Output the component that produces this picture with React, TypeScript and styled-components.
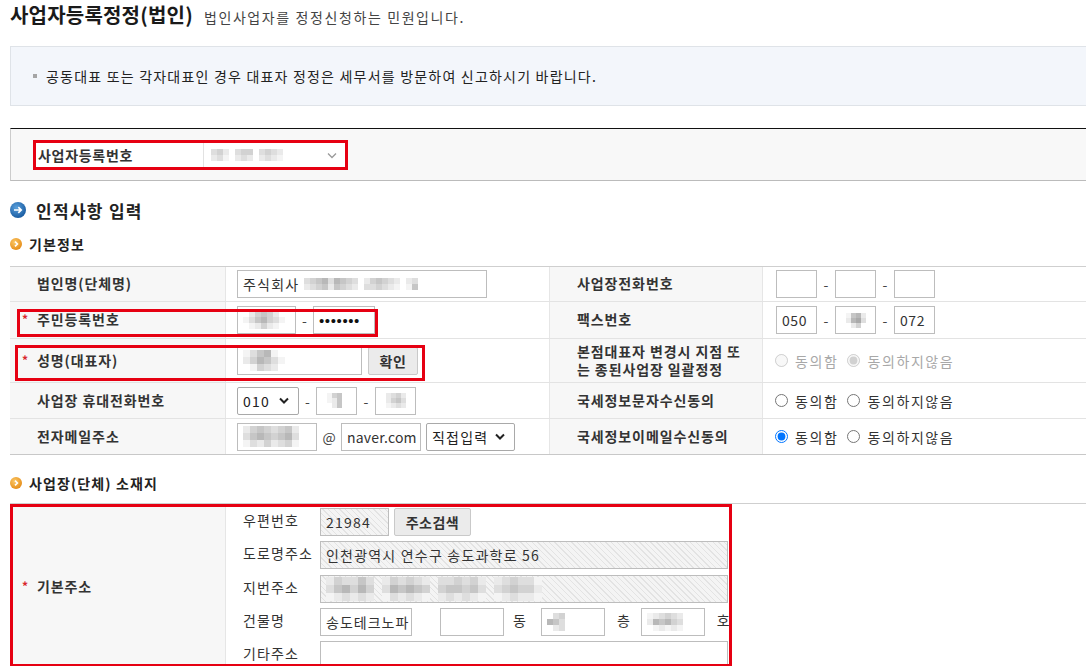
import React from "react"
import styled, { createGlobalStyle } from "styled-components"

const GlobalStyle = createGlobalStyle`
    html, body {
        margin: 0;
        padding: 0;
        background: #fff;
        overflow: hidden;
    }
    body {
        font-family: "Noto Sans CJK KR", "Noto Sans", sans-serif;
        font-size: 14px;
        color: #333;
    }
`

const shades: Record<string, string> = {
    "0": "transparent",
    "1": "#f4f4f4",
    "2": "#eaeaea",
    "3": "#dedede",
    "4": "#d2d2d2",
    "5": "#c6c6c6",
    "6": "#b8b8b8",
    "7": "#aaaaaa",
    "8": "#9c9c9c",
    "9": "#8e8e8e"
}

const MosaicGrid = styled.span<{ $cols: number; $cell: number }>`
    display: inline-grid;
    grid-template-columns: repeat(${(p) => p.$cols}, ${(p) => p.$cell}px);
    grid-auto-rows: ${(p) => p.$cell}px;
    vertical-align: middle;
    flex-shrink: 0;
`

const MosaicCell = styled.span<{ $c: string }>`
    background: ${(p) => p.$c};
`

// blurred-out personal data, drawn as grey pixel blocks
const Mosaic: React.FC<{ rows: string[]; cell?: number }> = ({ rows, cell = 6 }) => {
    const cols = Math.max(...rows.map((r) => r.length))
    return (
        <MosaicGrid $cols={cols} $cell={cell}>
            {rows.flatMap((r, i) =>
                r
                    .padEnd(cols, "0")
                    .split("")
                    .map((ch, j) => <MosaicCell key={`${i}-${j}`} $c={shades[ch]} />)
            )}
        </MosaicGrid>
    )
}

const Page = styled.div`
    padding-left: 10px;
    width: 1076px;
`

const TitleRow = styled.div`
    display: flex;
    align-items: baseline;
    height: 46px;
    padding-top: 2px;
    box-sizing: border-box;
`

const Title = styled.h1`
    margin: 0;
    font-size: 20px;
    line-height: 26px;
    letter-spacing: 0.2px;
    font-weight: bold;
    color: #1a1a1a;
`

const TitleDesc = styled.span`
    margin-left: 11px;
    font-size: 14px;
    letter-spacing: 1.6px;
    color: #444;
`

const Notice = styled.div`
    display: flex;
    align-items: center;
    height: 60px;
    box-sizing: border-box;
    padding-left: 22px;
    background: #f3f6fb;
    border: 1px solid #dfe3e8;
    border-right: none;
    font-size: 14px;
    letter-spacing: 1.2px;
    color: #222;
`

const Bullet = styled.span`
    width: 4px;
    height: 4px;
    background: #a5a5a5;
    margin-right: 9px;
`

const BizBox = styled.div`
    margin-top: 22px;
    height: 53px;
    box-sizing: border-box;
    padding: 11px 0 0 22px;
    background: #f8f8f8;
    border-top: 1px solid #111;
    border-bottom: 1px solid #bbb;
    border-left: 1px solid #ccc;
`

const RedFrame = styled.div`
    display: flex;
    width: 315px;
    height: 30px;
    box-sizing: border-box;
    border: 3px solid #e60012;
    background: #fff;
`

const BizLabel = styled.div`
    display: flex;
    align-items: center;
    width: 165px;
    padding-left: 2px;
    font-weight: bold;
    font-size: 14px;
    letter-spacing: 0.7px;
    color: #333;
`

const BizSelect = styled.div`
    flex: 1;
    display: flex;
    align-items: center;
    justify-content: space-between;
    padding: 0 8px 0 7px;
    border-left: 1px solid #e2e2e2;
`

const Chevron: React.FC<{ $light?: boolean }> = ({ $light }) => (
    <svg width="10" height="7" viewBox="0 0 10 7">
        <path
            d="M1 1.5 L5 5.5 L9 1.5"
            fill="none"
            stroke={$light ? "#9a9a9a" : "#222"}
            strokeWidth={$light ? 1.3 : 2}
        />
    </svg>
)

const SectionTitle = styled.h2`
    display: flex;
    align-items: center;
    gap: 10px;
    margin: 18px 0 0;
    height: 22px;
    font-size: 17px;
    letter-spacing: 1.3px;
    font-weight: bold;
    color: #222;
`

const SubTitle = styled.h3<{ $mt: number; $mb: number }>`
    display: flex;
    align-items: center;
    gap: 7px;
    margin: ${(p) => p.$mt}px 0 ${(p) => p.$mb}px;
    height: 18px;
    font-size: 14px;
    letter-spacing: 1.1px;
    font-weight: bold;
    color: #222;
`

const BlueIcon = () => (
    <svg width="16" height="16" viewBox="0 0 16 16">
        <defs>
            <radialGradient id="bl" cx="40%" cy="35%" r="70%">
                <stop offset="0" stopColor="#5aa0dc" />
                <stop offset="1" stopColor="#15589e" />
            </radialGradient>
        </defs>
        <circle cx="8" cy="8" r="8" fill="url(#bl)" />
        <path d="M4 8 H11 M8.3 5.2 L11.2 8 L8.3 10.8" fill="none" stroke="#fff" strokeWidth="1.7" />
    </svg>
)

const OrangeIcon = () => (
    <svg width="12" height="12" viewBox="0 0 12 12">
        <defs>
            <radialGradient id="or" cx="40%" cy="35%" r="70%">
                <stop offset="0" stopColor="#fbc866" />
                <stop offset="1" stopColor="#e58a14" />
            </radialGradient>
        </defs>
        <circle cx="6" cy="6" r="6" fill="url(#or)" />
        <path d="M5 3.6 L7.4 6 L5 8.4" fill="none" stroke="#fff" strokeWidth="1.6" />
    </svg>
)

const FormTable = styled.div`
    position: relative;
    border-top: 1px solid #cfcfcf;
`

const Row = styled.div<{ $h: number; $last?: boolean }>`
    display: grid;
    grid-template-columns: 216px 324px 213px 1fr;
    height: ${(p) => p.$h}px;
    box-sizing: border-box;
    border-bottom: 1px solid ${(p) => (p.$last ? "#c8c8c8" : "#e3e3e3")};
`

const Label = styled.div`
    display: flex;
    align-items: center;
    padding: 0 0 2px 27px;
    background: #f7f7f7;
    border-right: 1px solid #e6e6e6;
    font-weight: bold;
    font-size: 14px;
    line-height: 18px;
    letter-spacing: 0.9px;
    color: #333;
`

const Star = styled.span`
    width: 15px;
    margin-left: -15px;
    color: #d9262c;
    font-size: 12px;
    font-weight: bold;
`

const Value = styled.div<{ $pl: number; $divider?: boolean }>`
    display: flex;
    align-items: center;
    padding-left: ${(p) => p.$pl}px;
    border-right: ${(p) => (p.$divider ? "1px solid #e6e6e6" : "none")};
`

const Field = styled.div<{ $w: number; $hatch?: boolean; $h?: number; $ml?: number; $ls?: number }>`
    display: flex;
    align-items: center;
    width: ${(p) => p.$w}px;
    height: ${(p) => p.$h ?? 28}px;
    box-sizing: border-box;
    margin-left: ${(p) => p.$ml ?? 0}px;
    padding-left: 5px;
    border: 1px solid #bdbdbd;
    background: ${(p) =>
        p.$hatch ? "repeating-linear-gradient(45deg, #f4f4f4 0 3px, #e3e3e3 3px 4px)" : "#fff"};
    font-size: 14px;
    letter-spacing: ${(p) => p.$ls ?? 1.2}px;
    color: #333;
    white-space: nowrap;
    overflow: hidden;
    flex-shrink: 0;
`

const Dots = styled.span`
    font-family: "Liberation Sans", Arial, sans-serif;
    font-size: 15px;
    letter-spacing: 0.6px;
    color: #111;
`

const Sep = styled.span<{ $w?: number }>`
    width: ${(p) => p.$w ?? 18}px;
    text-align: center;
    font-size: 14px;
    color: #444;
    flex-shrink: 0;
`

const SelectBox = styled.div<{ $w: number; $ml?: number }>`
    display: flex;
    align-items: center;
    justify-content: space-between;
    width: ${(p) => p.$w}px;
    height: 28px;
    box-sizing: border-box;
    margin-left: ${(p) => p.$ml ?? 0}px;
    padding: 0 9px 0 5px;
    border: 1px solid #a9a9a9;
    border-radius: 2px;
    background: #fff;
    font-size: 14px;
    letter-spacing: 1.2px;
    color: #222;
    flex-shrink: 0;
`

const Button = styled.button<{ $w: number; $ml: number }>`
    width: ${(p) => p.$w}px;
    height: 28px;
    margin-left: ${(p) => p.$ml}px;
    padding: 0;
    border: 1px solid #c9c9c9;
    border-radius: 2px;
    background: #ebebeb;
    font-family: inherit;
    font-weight: bold;
    font-size: 14px;
    letter-spacing: 0.5px;
    color: #333;
    flex-shrink: 0;
`

const RadioLabel = styled.label<{ $disabled?: boolean }>`
    display: flex;
    align-items: center;
    gap: 7px;
    margin-right: 9px;
    font-size: 14px;
    letter-spacing: 1.6px;
    color: ${(p) => (p.$disabled ? "#a8a8a8" : "#333")};

    input {
        margin: 0;
        width: 13px;
        height: 13px;
    }
`

const Highlight = styled.div<{ $top: number; $left: number; $w: number; $h: number }>`
    position: absolute;
    top: ${(p) => p.$top}px;
    left: ${(p) => p.$left}px;
    width: ${(p) => p.$w}px;
    height: ${(p) => p.$h}px;
    box-sizing: border-box;
    border: 3px solid #e60012;
    pointer-events: none;
`

const AddrTable = styled.div`
    position: relative;
    display: grid;
    grid-template-columns: 216px 1fr;
    height: 200px;
    border-top: 1px solid #cfcfcf;
`

const AddrLabel = styled(Label)`
    align-items: flex-start;
    padding-top: 73px;
`

const AddrValue = styled.div`
    padding: 4px 0 0 17px;
`

const AddrGrid = styled.div`
    display: grid;
    grid-template-columns: 77px auto;
    grid-auto-rows: 28px;
    row-gap: 5.3px;
    align-items: center;
`

const SubLabel = styled.span`
    padding-bottom: 4px;
    font-size: 14px;
    letter-spacing: 1.1px;
    color: #333;
`

const Line = styled.div`
    display: flex;
    align-items: center;
`

const Unit = styled.span<{ $ml: number; $mr: number }>`
    margin: 0 ${(p) => p.$mr}px 3px ${(p) => p.$ml}px;
    font-size: 14px;
    color: #333;
`

type Radio = { name: string; yes?: boolean; no?: boolean; disabled?: boolean }

const Agree: React.FC<Radio> = ({ name, yes, no, disabled }) => (
    <>
        <RadioLabel $disabled={disabled}>
            <input type="radio" name={name} defaultChecked={yes} disabled={disabled} />
            동의함
        </RadioLabel>
        <RadioLabel $disabled={disabled}>
            <input type="radio" name={name} defaultChecked={no} disabled={disabled} />
            동의하지않음
        </RadioLabel>
    </>
)

export default function App() {
    return (
        <>
            <GlobalStyle />
            <Page>
                <TitleRow>
                    <Title>사업자등록정정(법인)</Title>
                    <TitleDesc>법인사업자를 정정신청하는 민원입니다.</TitleDesc>
                </TitleRow>

                <Notice>
                    <Bullet />
                    공동대표 또는 각자대표인 경우 대표자 정정은 세무서를 방문하여 신고하시기 바랍니다.
                </Notice>

                <BizBox>
                    <RedFrame>
                        <BizLabel>사업자등록번호</BizLabel>
                        <BizSelect>
                            <Mosaic rows={["3420344034320", "2310232023210"]} cell={6} />
                            <Chevron $light />
                        </BizSelect>
                    </RedFrame>
                </BizBox>

                <SectionTitle>
                    <BlueIcon />
                    인적사항 입력
                </SectionTitle>
                <SubTitle $mt={14} $mb={13}>
                    <OrangeIcon />
                    기본정보
                </SubTitle>

                <FormTable>
                    <Row $h={35}>
                        <Label>법인명(단체명)</Label>
                        <Value $pl={11} $divider>
                            <Field $w={250}>
                                주식회사&nbsp;
                                <Mosaic rows={["34563654302454320230", "23452543203343210150"]} cell={6} />
                            </Field>
                        </Value>
                        <Label>사업장전화번호</Label>
                        <Value $pl={13}>
                            <Field $w={41} />
                            <Sep>-</Sep>
                            <Field $w={41} />
                            <Sep>-</Sep>
                            <Field $w={41} />
                        </Value>
                    </Row>
                    <Row $h={37}>
                        <Label>
                            <Star>*</Star>주민등록번호
                        </Label>
                        <Value $pl={11} $divider>
                            <Field $w={59}>
                                <Mosaic rows={["02454200", "13564310", "01242100"]} cell={6} />
                            </Field>
                            <Sep $w={17}>-</Sep>
                            <Field $w={62}>
                                <Dots>•••••••</Dots>
                            </Field>
                        </Value>
                        <Label>팩스번호</Label>
                        <Value $pl={13}>
                            <Field $w={41} $ls={0.6}>
                                050
                            </Field>
                            <Sep>-</Sep>
                            <Field $w={41}>
                                <Mosaic rows={["01562", "02673", "00240"]} cell={5} />
                            </Field>
                            <Sep>-</Sep>
                            <Field $w={41} $ls={0.6}>
                                072
                            </Field>
                        </Value>
                    </Row>
                    <Row $h={44}>
                        <Label>
                            <Star>*</Star>성명(대표자)
                        </Label>
                        <Value $pl={11} $divider>
                            <Field $w={125} $h={29}>
                                <Mosaic rows={["135610", "246531", "014320"]} cell={7} />
                            </Field>
                            <Button $w={50} $ml={6}>
                                확인
                            </Button>
                        </Value>
                        <Label>
                            본점대표자 변경시 지점 또
                            <br />는 종된사업장 일괄정정
                        </Label>
                        <Value $pl={12}>
                            <Agree name="branch" no disabled />
                        </Value>
                    </Row>
                    <Row $h={36}>
                        <Label>사업장 휴대전화번호</Label>
                        <Value $pl={11} $divider>
                            <SelectBox $w={62}>
                                010
                                <Chevron />
                            </SelectBox>
                            <Sep $w={17}>-</Sep>
                            <Field $w={41}>
                                <Mosaic rows={["01450", "01250", "00250"]} cell={5} />
                            </Field>
                            <Sep>-</Sep>
                            <Field $w={41}>
                                <Mosaic rows={["023420", "024530", "012320"]} cell={5} />
                            </Field>
                        </Value>
                        <Label>국세정보문자수신동의</Label>
                        <Value $pl={12}>
                            <Agree name="sms" />
                        </Value>
                    </Row>
                    <Row $h={36} $last>
                        <Label>전자메일주소</Label>
                        <Value $pl={11} $divider>
                            <Field $w={80}>
                                <Mosaic rows={["245434520", "356545630", "132423410"]} cell={7} />
                            </Field>
                            <Sep $w={24}>@</Sep>
                            <Field $w={80} $ls={0.2}>
                                naver.com
                            </Field>
                            <SelectBox $w={89} $ml={5}>
                                직접입력
                                <Chevron />
                            </SelectBox>
                        </Value>
                        <Label>국세정보이메일수신동의</Label>
                        <Value $pl={12}>
                            <Agree name="email" yes />
                        </Value>
                    </Row>
                    <Highlight $top={42} $left={7} $w={361} $h={28} />
                    <Highlight $top={78} $left={5} $w={410} $h={36} />
                </FormTable>

                <SubTitle $mt={19} $mb={11}>
                    <OrangeIcon />
                    사업장(단체) 소재지
                </SubTitle>

                <AddrTable>
                    <AddrLabel>
                        <Star>*</Star>기본주소
                    </AddrLabel>
                    <AddrValue>
                        <AddrGrid>
                            <SubLabel>우편번호</SubLabel>
                            <Line>
                                <Field $w={69} $hatch>
                                    21984
                                </Field>
                                <Button $w={77} $ml={5}>
                                    주소검색
                                </Button>
                            </Line>
                            <SubLabel>도로명주소</SubLabel>
                            <Field $w={408} $hatch>
                                인천광역시 연수구 송도과학로 56
                            </Field>
                            <SubLabel>지번주소</SubLabel>
                            <Field $w={408} $hatch>
                                <Mosaic
                                    rows={[
                                        "2433530243432033434202343310",
                                        "3564640365654045545303454420",
                                        "1232320132321023232101232210"
                                    ]}
                                    cell={8}
                                />
                            </Field>
                            <SubLabel>건물명</SubLabel>
                            <Line>
                                <Field $w={92} $ls={1}>
                                    송도테크노파
                                </Field>
                                <Field $w={64} $ml={28} />
                                <Unit $ml={9} $mr={15}>
                                    동
                                </Unit>
                                <Field $w={64}>
                                    <Mosaic rows={["0340", "6530", "0230"]} cell={6} />
                                </Field>
                                <Unit $ml={12} $mr={11}>
                                    층
                                </Unit>
                                <Field $w={64}>
                                    <Mosaic rows={["123432", "265643", "012121"]} cell={6} />
                                </Field>
                                <Unit $ml={12} $mr={0}>
                                    호
                                </Unit>
                            </Line>
                            <SubLabel>기타주소</SubLabel>
                            <Field $w={408} />
                        </AddrGrid>
                    </AddrValue>
                    <Highlight $top={0} $left={0} $w={722} $h={163} />
                </AddrTable>
            </Page>
        </>
    )
}
